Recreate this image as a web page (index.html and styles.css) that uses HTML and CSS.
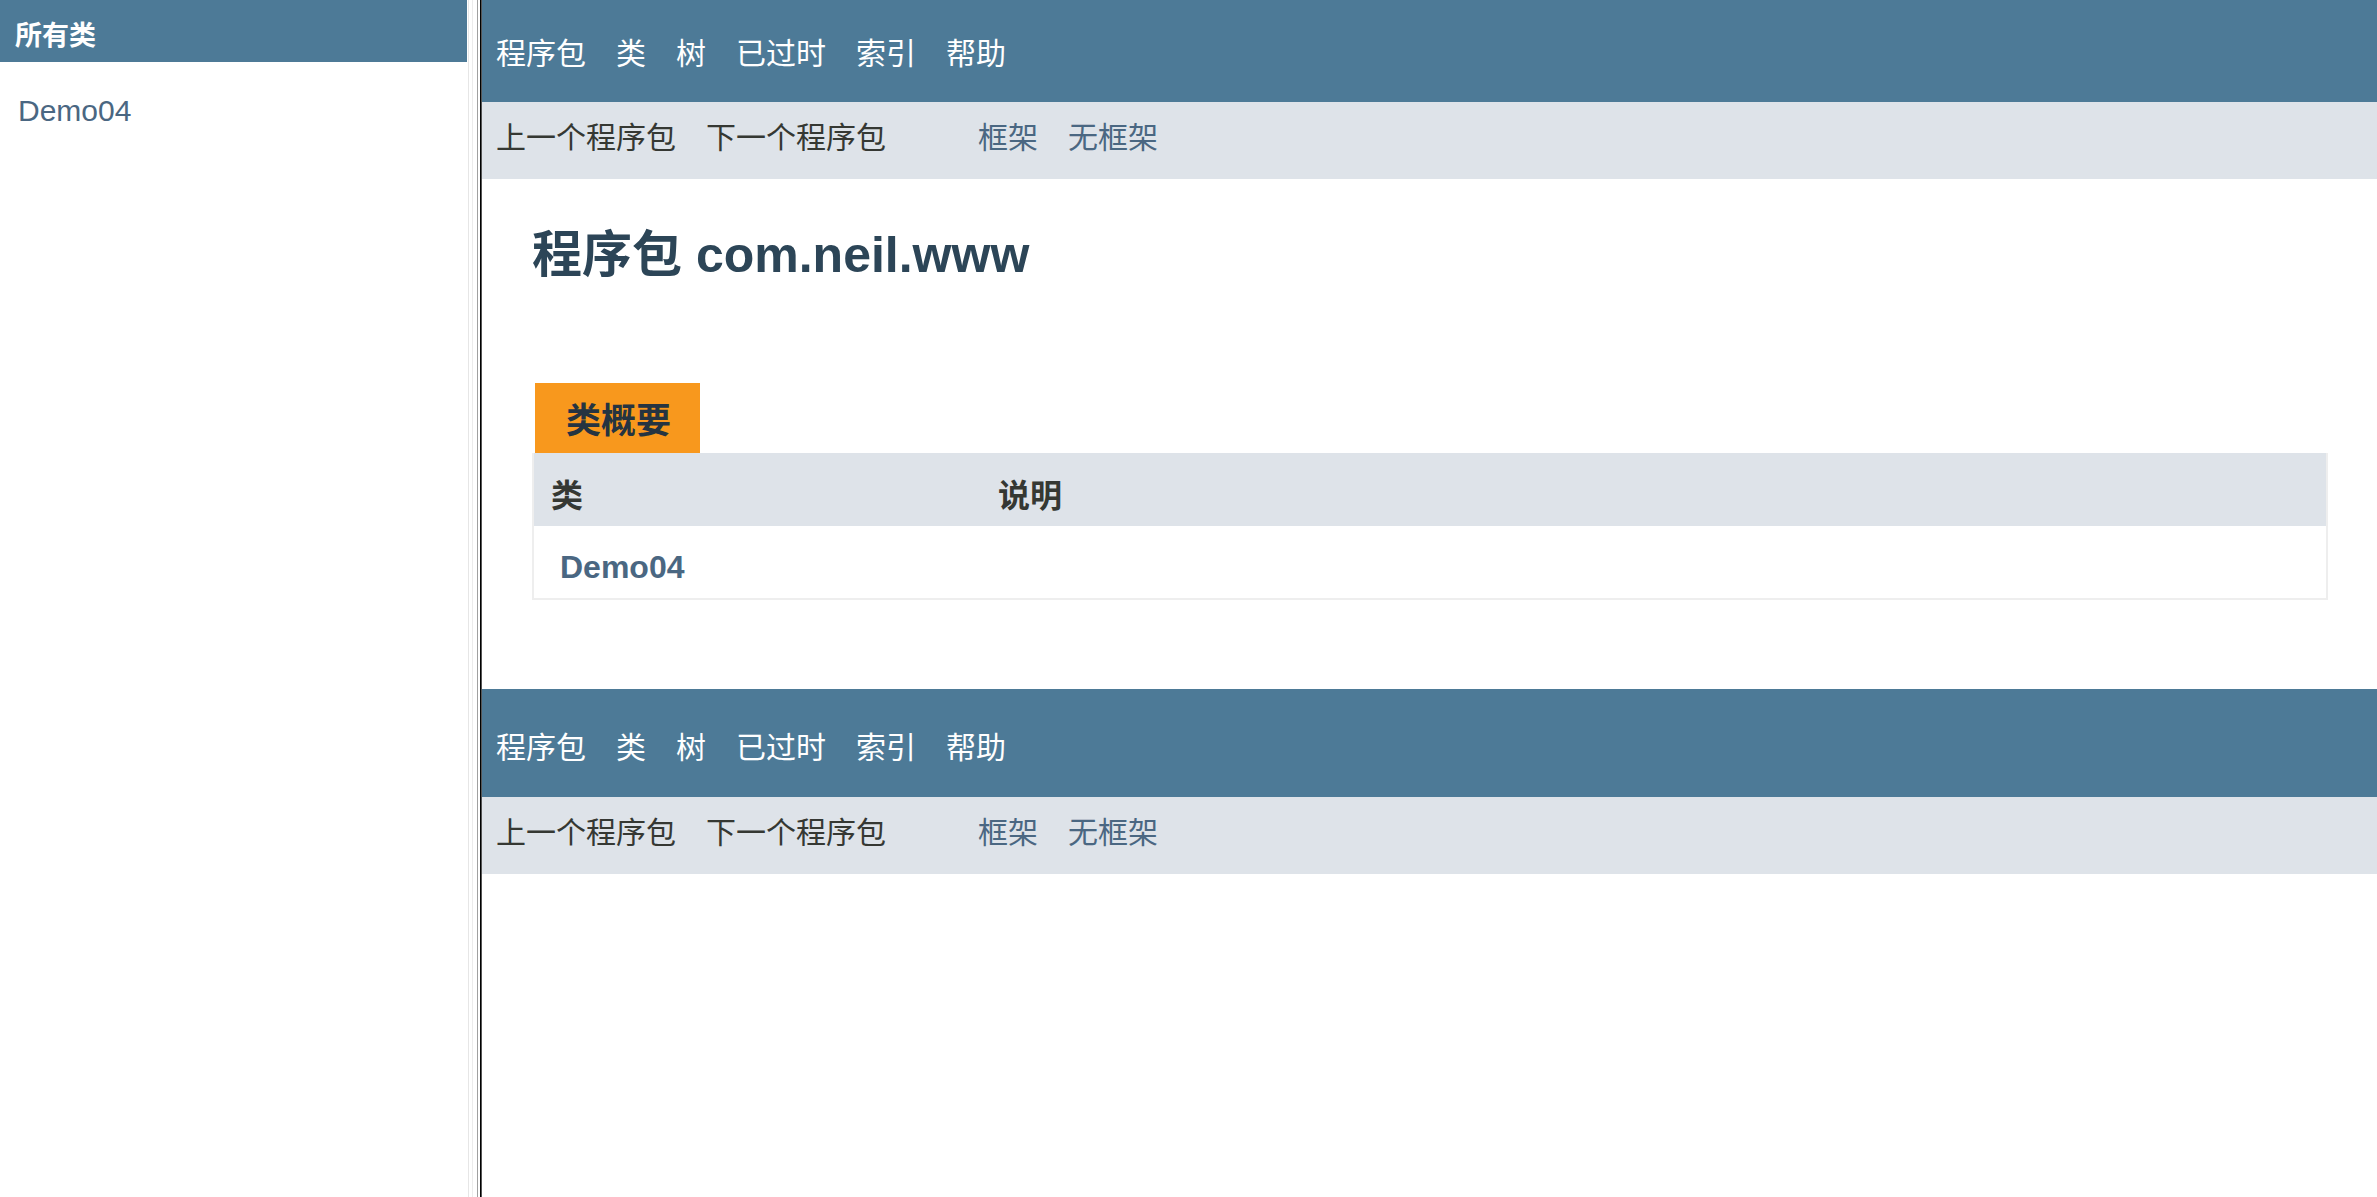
FILE: index.html
```html
<!DOCTYPE html>
<html lang="zh-CN">
<head>
<meta charset="utf-8">
<title>com.neil.www</title>
<link rel="stylesheet" href="styles.css">
</head>
<body class="page">
  <aside class="left-frame">
    <h1 class="bar">所有类</h1>
    <ul class="class-list">
      <li><a href="#" class="class-link">Demo04</a></li>
    </ul>
  </aside>
  <div class="frame-divider"></div>
  <main class="right-frame">
    <nav class="top-nav">
      <ul class="nav-list">
        <li>程序包</li>
        <li>类</li>
        <li>树</li>
        <li>已过时</li>
        <li>索引</li>
        <li>帮助</li>
      </ul>
    </nav>
    <div class="sub-nav">
      <ul class="nav-list">
        <li>上一个程序包</li>
        <li>下一个程序包</li>
      </ul>
      <ul class="nav-list frames">
        <li><a href="#" class="nav-link">框架</a></li>
        <li><a href="#" class="nav-link">无框架</a></li>
      </ul>
    </div>
    <div class="content">
      <h1 class="title">程序包 com.neil.www</h1>
      <section class="summary">
        <div class="summary-caption"><span class="caption-tab">类概要</span></div>
        <div class="summary-table">
          <div class="row head-row">
            <div class="cell head-cell">类</div>
            <div class="cell head-cell">说明</div>
          </div>
          <div class="row data-row">
            <div class="cell data-first"><a href="#" class="type-link">Demo04</a></div>
            <div class="cell data-last"></div>
          </div>
        </div>
      </section>
    </div>
    <nav class="bottom-nav">
      <ul class="nav-list">
        <li>程序包</li>
        <li>类</li>
        <li>树</li>
        <li>已过时</li>
        <li>索引</li>
        <li>帮助</li>
      </ul>
    </nav>
    <div class="sub-nav">
      <ul class="nav-list">
        <li>上一个程序包</li>
        <li>下一个程序包</li>
      </ul>
      <ul class="nav-list frames">
        <li><a href="#" class="nav-link">框架</a></li>
        <li><a href="#" class="nav-link">无框架</a></li>
      </ul>
    </div>
  </main>
</body>
</html>
```

FILE: styles.css
```css
html, body {
  height: 100%;
}

.page {
  margin: 0;
  display: flex;
  overflow: hidden;
  background: #ffffff;
  font-family: "Liberation Sans", "Noto Sans CJK SC", sans-serif;
  color: #353833;
}

a {
  text-decoration: none;
}

/* left frame */
.left-frame {
  width: 467px;
  flex: 0 0 467px;
}

.bar {
  margin: 0;
  height: 62px;
  box-sizing: border-box;
  padding: 10px 0 0 15px;
  display: flex;
  align-items: center;
  background: #4d7a97;
  color: #ffffff;
  font-size: 27px;
  line-height: 34px;
  font-weight: bold;
}

.class-list {
  list-style: none;
  margin: 0;
  padding: 32px 0 0 18px;
}

.class-list li {
  font-size: 30px;
  line-height: 34px;
}

.class-link {
  color: #4a6782;
}

/* frame border */
.frame-divider {
  flex: 0 0 15px;
  width: 15px;
  background: linear-gradient(to right,
    #ffffff 0 1px,
    #e6e6e6 1px 2px,
    #ffffff 2px 5px,
    #ececec 5px 6px,
    #ffffff 6px 10px,
    #a0a0a0 10px 11px,
    #ffffff 11px 13px,
    #000000 13px 14px,
    #555555 14px 15px);
}

/* right frame */
.right-frame {
  flex: 1 1 auto;
  min-width: 0;
}

.nav-list {
  list-style: none;
  margin: 0;
  padding: 0;
  display: flex;
  gap: 30px;
  font-size: 30px;
  line-height: 40px;
}

.top-nav {
  height: 102px;
  box-sizing: border-box;
  padding: 5px 0 0 14px;
  display: flex;
  align-items: center;
  background: #4d7a97;
  color: #ffffff;
}

.bottom-nav {
  margin-top: 89px;
  height: 108px;
  box-sizing: border-box;
  padding: 10px 0 0 14px;
  display: flex;
  align-items: center;
  background: #4d7a97;
  color: #ffffff;
}

.sub-nav {
  height: 77px;
  box-sizing: border-box;
  padding: 0 0 5px 14px;
  display: flex;
  align-items: center;
  background: #dee3e9;
  color: #353833;
}

.frames {
  margin-left: 92px;
}

.nav-link {
  color: #4a6782;
}

/* content */
.content {
  padding: 0 49px 0 50px;
}

.title {
  margin: 46px 0 0;
  font-size: 50px;
  line-height: 60px;
  font-weight: bold;
  color: #2c4557;
}

.summary {
  margin-top: 98px;
}

.summary-caption {
  display: flex;
}

.caption-tab {
  margin-left: 3px;
  height: 70px;
  box-sizing: border-box;
  padding: 6px 29px 0 31px;
  display: flex;
  align-items: center;
  background: #f8981d;
  color: #253441;
  font-size: 35px;
  line-height: 44px;
  font-weight: bold;
}

.summary-table {
  border-left: 2px solid #eeeeee;
  border-right: 2px solid #eeeeee;
  border-bottom: 2px solid #eeeeee;
}

.row {
  display: grid;
  grid-template-columns: 447px 1fr;
}

.head-row {
  background: #dee3e9;
}

.cell {
  line-height: 40px;
  font-size: 32px;
}

.head-cell {
  padding: 23px 3px 10px 17px;
  font-weight: bold;
  color: #353833;
}

.data-first {
  padding: 21px 3px 11px 26px;
}

.data-last {
  padding: 21px 3px 11px 17px;
}

.type-link {
  color: #4a6782;
  font-weight: bold;
}
```
